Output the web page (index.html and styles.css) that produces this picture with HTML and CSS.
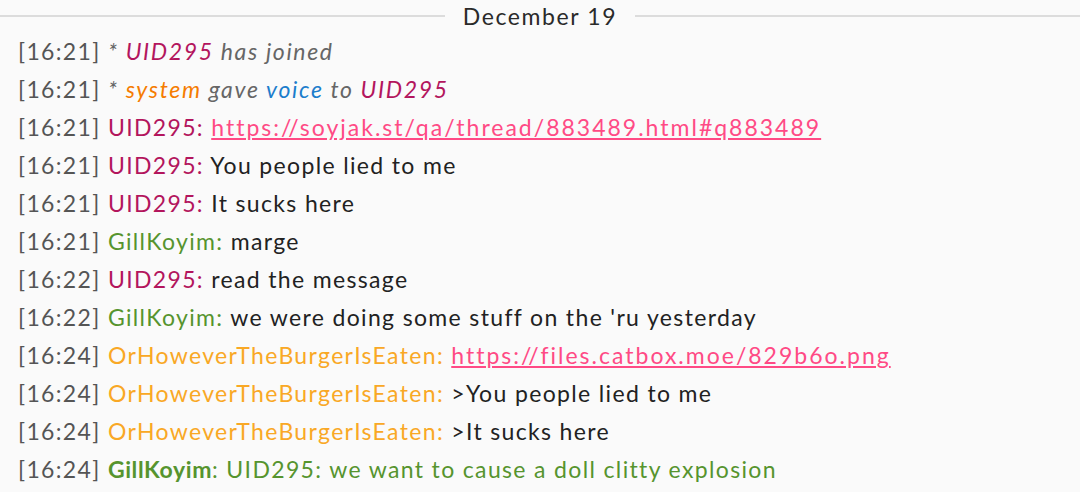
FILE: index.html
```html
<!DOCTYPE html>
<html lang="en">
<head>
  <meta charset="UTF-8" />
  <title>Chat log</title>
  <link rel="stylesheet" href="styles.css">
</head>
<body>

<div class="log">

  <div class="day">
    <span class="day-line"></span>
    <span class="day-label">December 19</span>
    <span class="day-line"></span>
  </div>

  <div class="msg"><span class="time">[16:21]</span> <em class="event">* <span class="uid">UID295</span> has joined</em></div>
  <div class="msg"><span class="time">[16:21]</span> <em class="event">* <span class="sys">system</span> gave <span class="voice">voice</span> to <span class="uid">UID295</span></em></div>
  <div class="msg"><span class="time">[16:21]</span> <span class="uid">UID295:</span> <a class="link" href="#">https://soyjak.st/qa/thread/883489.html#q883489</a></div>
  <div class="msg"><span class="time">[16:21]</span> <span class="uid">UID295:</span> You people lied to me</div>
  <div class="msg"><span class="time">[16:21]</span> <span class="uid">UID295:</span> It sucks here</div>
  <div class="msg"><span class="time">[16:21]</span> <span class="gill">GillKoyim:</span> marge</div>
  <div class="msg"><span class="time">[16:22]</span> <span class="uid">UID295:</span> read the message</div>
  <div class="msg"><span class="time">[16:22]</span> <span class="gill">GillKoyim:</span> we were doing some stuff on the 'ru yesterday</div>
  <div class="msg"><span class="time">[16:24]</span> <span class="burger">OrHoweverTheBurgerIsEaten:</span> <a class="link" href="#">https://files.catbox.moe/829b6o.png</a></div>
  <div class="msg"><span class="time">[16:24]</span> <span class="burger">OrHoweverTheBurgerIsEaten:</span> &gt;You people lied to me</div>
  <div class="msg"><span class="time">[16:24]</span> <span class="burger">OrHoweverTheBurgerIsEaten:</span> &gt;It sucks here</div>
  <div class="msg action"><span class="time">[16:24]</span> <b>GillKoyim</b>: UID295: we want to cause a doll clitty explosion</div>

</div>

</body>
</html>
```

FILE: styles.css
```css
body {
  margin: 0;
  background: #fafafa;
  font-family: "Lato", "Open Sans", sans-serif;
  color: #222;
  overflow: hidden;
}

.log {
  padding: 0 18px;
}

.day {
  display: flex;
  align-items: center;
  gap: 18px;
  height: 32px;
  margin: 0 -18px;
}

.day-line {
  flex: 1;
  height: 2px;
  background: #dcdcdc;
}

.day-label {
  font-size: 23px;
  letter-spacing: 1.6px;
  color: #2a2a2a;
}

.msg {
  font-size: 23px;
  letter-spacing: 1.35px;
  line-height: 38px;
  white-space: nowrap;
}

.time {
  color: #555;
}

.event {
  color: #666;
  letter-spacing: 1.65px;
}

.uid {
  color: #b3155d;
}

.sys {
  color: #f57c00;
}

.voice {
  color: #1b7dcc;
}

.gill {
  color: #56942e;
}

.burger {
  color: #f9a825;
}

.link {
  color: #ff4a85;
  letter-spacing: 2px;
}

.action {
  color: #56942e;
}

.action b {
  font-weight: bold;
  letter-spacing: 0.6px;
}
```
